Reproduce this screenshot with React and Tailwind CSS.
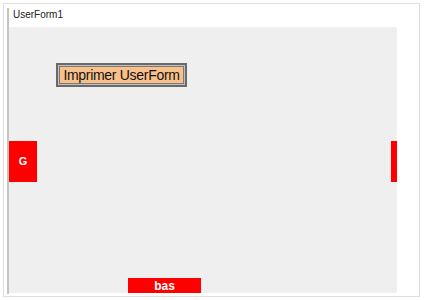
export default function App() {
  return (
    <div className="w-[424px] h-[300px] bg-white p-[3px]" style={{ fontFamily: '"Liberation Sans", Arial, sans-serif' }}>
      <div className="w-[417px] h-[294px] border border-[#dedede] bg-white flex">
        <div className="w-[3px]" />
        <div className="w-[2px] bg-[#c4c4c4] mt-[4px] mb-[2px]" />
        <div className="flex flex-col">
          <div className="h-[23px] pl-[4px] pt-[6px] text-[10px] leading-none text-[#222]">UserForm1</div>
          <div className="w-[388px] h-[266px] bg-[#efefef] flex flex-col">
            <div className="ml-[47px] mt-[36px] self-start border-2 border-[#6a6a6a] bg-[#c0c0c0] p-px">
              <div className="w-[125px] h-[18px] border border-[#7a7a7a] bg-[#f9c08a] flex items-center justify-center text-[14px] leading-none tracking-[-0.3px] text-[#111]">
                Imprimer UserForm
              </div>
            </div>
            <div className="mt-[54px] flex justify-between">
              <div className="w-[28px] h-[41px] bg-[#ff0000] flex items-center justify-center text-white font-bold text-[11px]">G</div>
              <div className="w-[6px] h-[41px] bg-[#ff0000]" />
            </div>
            <div className="mt-auto ml-[119px] w-[73px] h-[15px] bg-[#ff0000] flex items-center justify-center text-white font-bold text-[12px] leading-none">bas</div>
          </div>
        </div>
      </div>
    </div>
  );
}
